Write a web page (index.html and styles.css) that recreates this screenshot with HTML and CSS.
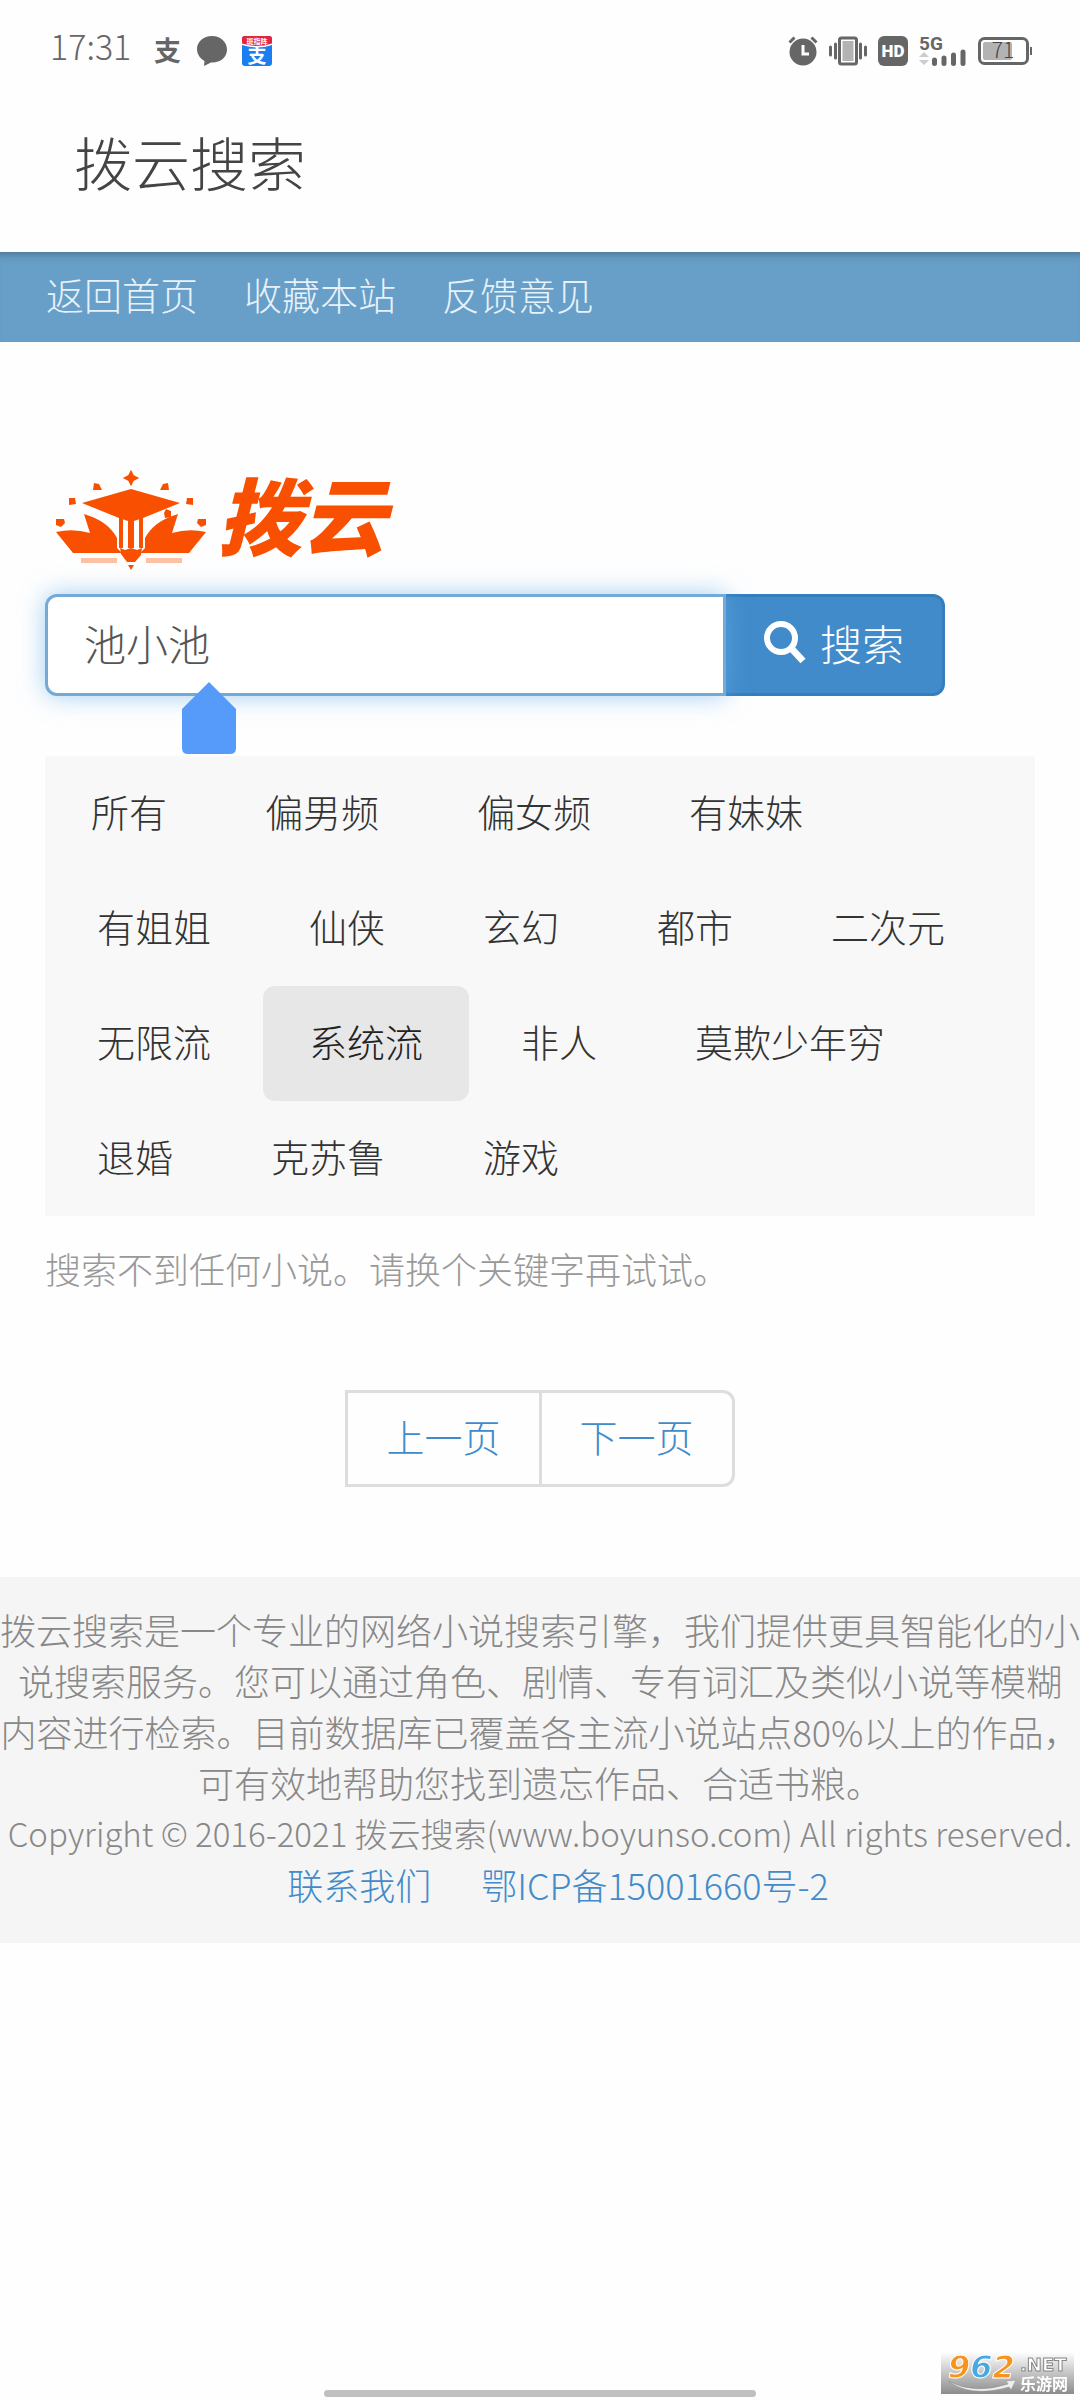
FILE: index.html
```html
<!DOCTYPE html>
<html lang="zh-CN">
<head>
    <meta charset="UTF-8">
    <meta name="viewport" content="width=device-width, initial-scale=1.0">
    <title>拨云搜索</title>
    <link rel="stylesheet" href="styles.css">
</head>
<body>

    <div class="status-bar">
        <div class="status-left">
            <span class="clock">17:31</span>
            <svg width="30" height="30" viewBox="0 0 30 30" aria-hidden="true">
                <text class="pay-glyph" x="2" y="25">支</text>
            </svg>
            <svg width="30" height="30" viewBox="0 0 30 30" aria-hidden="true">
                <path fill="#666" d="M15 0C6.500 0 0 5.800 0 13c0 5 3 9.500 7.500 12l-.5 5 7-3.500C23 27 30 21.500 30 13.500 30 6 23.500 0 15 0z"/>
            </svg>
            <svg width="30" height="30" viewBox="0 0 30 30" aria-hidden="true">
                <rect width="30" height="30" rx="3" fill="#1a7df0"/>
                <path fill="#fff" d="M0 7h30v2q-15 5-30 0z"/>
                <path fill="#e3243b" d="M3 0h24q3 0 3 3v4.500q-15 5-30 0V3q0-3 3-3z"/>
                <text class="app-tag" x="15" y="8">斑指阵</text>
                <text class="app-glyph" x="15" y="27">支</text>
            </svg>
        </div>
        <div class="status-right">
            <svg width="30" height="30" viewBox="0 0 30 30" aria-hidden="true">
                <circle cx="15" cy="16" r="13.500" fill="#666"/>
                <path d="M1.500 6.500l5-5M28.500 6.500l-5-5" stroke="#666" stroke-width="3"/>
                <path d="M15 9v9h6" fill="none" stroke="#fff" stroke-width="3"/>
            </svg>
            <svg width="38" height="30" viewBox="0 0 38 30" aria-hidden="true">
                <rect x="10.500" y="2" width="17" height="26" rx="2" fill="#fff" stroke="#666" stroke-width="3"/>
                <rect x="13.500" y="5" width="11" height="20" fill="#b3b3b3"/>
                <path d="M6.500 8v14M31.500 8v14M1.500 11v8M36.500 11v8" stroke="#666" stroke-width="3" stroke-linecap="round"/>
            </svg>
            <svg width="30" height="30" viewBox="0 0 30 30" aria-hidden="true">
                <rect width="30" height="30" rx="6" fill="#666"/>
                <text class="hd" x="15" y="21">HD</text>
            </svg>
            <svg width="48" height="30" viewBox="0 0 48 30" aria-hidden="true">
                <text class="net" x="0" y="14">5G</text>
                <path fill="#ccc" d="M0 21l5-5 5 5zM0 24h10l-5 5z"/>
                <path d="M15.500 24v3.500M25 22v5.500M34.500 19v8.500M44 16v11.500" stroke="#666" stroke-width="5" stroke-linecap="round"/>
            </svg>
            <svg width="54" height="28" viewBox="0 0 54 28" aria-hidden="true">
                <rect x="1.500" y="1.500" width="48" height="25" rx="5" fill="#fff" stroke="#666" stroke-width="3"/>
                <rect x="5" y="5" width="29" height="18" rx="2" fill="#b3b3b3"/>
                <path d="M53 10v8" stroke="#666" stroke-width="2"/>
                <text class="battery" x="25" y="21">71</text>
            </svg>
        </div>
    </div>

    <h1 class="title">拨云搜索</h1>

    <nav class="nav">
        <a href="#">返回首页</a>
        <a href="#">收藏本站</a>
        <a href="#">反馈意见</a>
    </nav>

    <main class="container">
        <svg class="logo" width="360" height="102" viewBox="0 0 360 102" role="img" aria-label="拨云">
            <g fill="#f85000">
                <!-- cap and tassel -->
                <path d="M28 32l49-14 49 14-37 15-12 4-12-4z"/>
                <path d="M112 38l5 2v6l-6 1-1-5z"/>
                <!-- open book -->
                <path d="M2 61q17-4 34 1l-6-19q24 7 33 24v10l5 5H19z"/>
                <path d="M152 61q-17-4-34 1l6-19q-24 7-33 24v10l-5 5h49z"/>
                <!-- pencil -->
                <path d="M65 46h4v31h-4zM74 48h6v29h-6zM85 46h4v31h-4z"/>
                <path d="M66 77l5 2 6-2 6 2 5-2-1 7-6 7h-8l-6-8zM74 94h6l-3 5z"/>
                <!-- sparks -->
                <path d="M77 1l2 4 4 2-4 2-2 4-2-4-4-2 4-2z" stroke="#f85000" stroke-width="2"/>
                <path d="M40 12l5 1 3 6h-9zM114 12l-5 1-3 6h9zM15 27h6l1 6-7 1zM139 27h-6l-1 6 7 1zM2 48l8 0 1 4-4 4-5-2zM152 48h-8l-1 4 4 4 5-2z"/>
                <path fill-opacity=".35" d="M27 87h36v5H27zM92 87h36v5H92z"/>
            </g>
            <text class="logo-text" x="164" y="78">拨云</text>
        </svg>

        <form class="search" action="#">
            <input class="search-input" type="text" name="q" value="池小池" aria-label="关键字">
            <button class="search-button" type="submit">
                <svg width="42" height="44" viewBox="0 0 42 44" aria-hidden="true">
                    <circle cx="17" cy="18" r="14" fill="none" stroke="#fff" stroke-width="6"/>
                    <path d="M27 28l12 13" stroke="#fff" stroke-width="7"/>
                </svg>
                搜索
            </button>
            <svg class="caret-handle" width="54" height="72" viewBox="0 0 54 72" aria-hidden="true">
                <path fill="#579bfa" d="M27 0l27 27v39q0 6-6 6H6q-6 0-6-6V27z"/>
            </svg>
        </form>

        <div class="categories">
            <a href="#">所有</a>
            <a href="#">偏男频</a>
            <a href="#">偏女频</a>
            <a href="#">有妹妹</a>
            <a href="#">有姐姐</a>
            <a href="#">仙侠</a>
            <a href="#">玄幻</a>
            <a href="#">都市</a>
            <a href="#">二次元</a>
            <a href="#">无限流</a>
            <a href="#" class="active">系统流</a>
            <a href="#">非人</a>
            <a href="#">莫欺少年穷</a>
            <a href="#">退婚</a>
            <a href="#">克苏鲁</a>
            <a href="#">游戏</a>
        </div>

        <p class="empty">搜索不到任何小说。请换个关键字再试试。</p>

        <div class="pagination">
            <a href="#">上一页</a>
            <a href="#">下一页</a>
        </div>
    </main>

    <footer class="footer">
        <p>拨云搜索是一个专业的网络小说搜索引擎，我们提供更具智能化的小<br>说搜索服务。您可以通过角色、剧情、专有词汇及类似小说等模糊<br>内容进行检索。目前数据库已覆盖各主流小说站点80%以上的作品，<br>可有效地帮助您找到遗忘作品、合适书粮。</p>
        <p class="copyright">Copyright © 2016-2021 拨云搜索(www.boyunso.com) All rights reserved.</p>
        <p class="footer-links">
            <a href="#">联系我们</a>
            <a href="#">鄂ICP备15001660号-2</a>
        </p>
    </footer>

    <div class="home-bar"></div>

    <svg class="watermark" width="133" height="42" viewBox="0 0 133 42" role="img" aria-label="962.NET 乐游网">
        <defs>
            <linearGradient id="fade" x1="0" y1="0" x2="0" y2="1">
                <stop offset="0" stop-color="#fff"/>
                <stop offset="1" stop-color="#8c8c8c"/>
            </linearGradient>
        </defs>
        <rect width="133" height="42" fill="url(#fade)"/>
        <text class="mark-number" x="7" y="26"><tspan fill="#f7941e">9</tspan><tspan fill="#4aa8e0">6</tspan><tspan fill="#f7941e">2</tspan></text>
        <text class="mark-net" x="79" y="19">.NET</text>
        <text class="mark-name" x="79" y="38">乐游网</text>
        <path fill="#eee" stroke="#888" stroke-width=".5" d="M7 29q26 14 60 3l-2-3 10-1-5 10-2-3Q30 46 7 29z"/>
    </svg>

</body>
</html>
```

FILE: styles.css
```css
* {
    box-sizing: border-box;
}
body {
    margin: 0;
    min-height: 100vh;
    background-color: #fefefe;
    color: #333;
    font-family: "Noto Sans CJK SC", sans-serif;
    font-size: 36px;
    font-weight: 300;
}
a {
    color: #428bca;
    text-decoration: none;
}
p {
    margin: 0;
}
svg {
    overflow: visible;
}

/* phone status bar */
.status-bar {
    display: flex;
    justify-content: space-between;
    align-items: center;
    height: 102px;
    padding: 0 48px 0 50px;
    color: #666;
}
.status-left,
.status-right {
    display: flex;
    align-items: center;
    gap: 11px;
}
.status-left {
    gap: 15px;
}
.clock {
    margin-right: 6px;
    padding-bottom: 10px;
    font-size: 34px;
    line-height: 40px;
}
.pay-glyph {
    fill: #666;
    font-size: 27px;
    font-weight: bold;
}
.app-tag {
    fill: #fff;
    font-size: 7px;
    font-weight: bold;
    text-anchor: middle;
}
.app-glyph {
    fill: #fff;
    font-size: 19px;
    font-weight: bold;
    text-anchor: middle;
}
.hd {
    fill: #fff;
    font-family: Roboto, sans-serif;
    font-size: 17px;
    font-weight: 900;
    text-anchor: middle;
}
.net {
    fill: #666;
    font-family: Roboto, sans-serif;
    font-size: 19px;
    font-weight: bold;
}
.battery {
    fill: #444;
    font-size: 21px;
    text-anchor: middle;
}

.title {
    margin: 0;
    height: 150px;
    padding-left: 74px;
    color: #444;
    font-size: 58px;
    font-weight: 300;
    line-height: 118px;
}
.nav {
    display: flex;
    gap: 46px;
    padding: 0 46px 6px;
    background-color: #679fc8;
    box-shadow: inset 0 10px 10px -8px rgba(0, 0, 0, 0.3);
    font-size: 38px;
    line-height: 84px;
}
.nav a {
    color: #e6f1fa;
}

.container {
    padding: 0 45px;
}
.logo {
    display: block;
    margin: 129px 0 0 9px;
}
.logo-text {
    fill: #f85000;
    font-size: 84px;
    font-style: italic;
    font-weight: 900;
}
.search {
    position: relative;
    display: flex;
    width: 900px;
    max-width: 100%;
    height: 102px;
    margin-top: 21px;
}
.search-input {
    position: relative;
    z-index: 1;
    flex: 1;
    min-width: 0;
    padding: 0 36px 6px;
    border: 3px solid #74aad8;
    border-radius: 12px 0 0 12px;
    background-color: #fff;
    box-shadow: 0 0 24px rgba(102, 175, 233, 0.6);
    color: #555;
    font-family: inherit;
    font-size: 42px;
    font-weight: 300;
    outline: none;
}
.search-button {
    display: flex;
    align-items: center;
    gap: 14px;
    padding: 0 38px 6px;
    border: 3px solid #357ebd;
    border-left: none;
    border-radius: 0 12px 12px 0;
    background-color: #428bca;
    color: #fff;
    font-family: inherit;
    font-size: 42px;
    font-weight: 300;
}
.caret-handle {
    position: absolute;
    z-index: 2;
    top: 88px;
    left: 137px;
}

.categories {
    display: flex;
    flex-wrap: wrap;
    margin-top: 60px;
    background-color: #f8f8f8;
    font-size: 38px;
    line-height: 109px;
}
.categories a {
    margin-left: 6px;
    padding: 0 46px 6px;
    border-radius: 12px;
    color: #333;
}
.categories a:first-child {
    margin-left: 0;
}
.categories .active {
    background-color: #e7e7e7;
    color: #222;
}

.empty {
    margin-top: 27px;
    color: #999;
    line-height: 51px;
}

.pagination {
    display: flex;
    justify-content: center;
    margin: 96px 0 90px;
    font-size: 38px;
    line-height: 85px;
}
.pagination a {
    padding: 0 38px 6px;
    border: 3px solid #ddd;
}
.pagination a:last-child {
    margin-left: -3px;
    border-radius: 0 12px 12px 0;
}

.footer {
    padding: 27px 0 33px;
    background-color: #f5f5f5;
    color: #888;
    line-height: 51px;
    text-align: center;
}
.copyright {
    font-size: 33px;
}
.footer-links {
    display: flex;
    justify-content: center;
    gap: 50px;
    padding-left: 36px;
}

.home-bar {
    position: fixed;
    bottom: 3px;
    left: 50%;
    width: 432px;
    height: 7px;
    margin-left: -216px;
    border-radius: 4px;
    background-color: #c0c0c0;
}
.watermark {
    position: fixed;
    right: 6px;
    bottom: 6px;
}
.mark-number {
    stroke: #fff;
    stroke-width: 1px;
    font-family: "DejaVu Sans", sans-serif;
    font-size: 32px;
    font-style: italic;
    font-weight: bold;
}
.mark-net {
    fill: #fff;
    stroke: #888;
    stroke-width: 1px;
    font-family: "DejaVu Sans", sans-serif;
    font-size: 18px;
    font-weight: bold;
}
.mark-name {
    fill: #fff;
    font-size: 16px;
    font-weight: bold;
}
```
